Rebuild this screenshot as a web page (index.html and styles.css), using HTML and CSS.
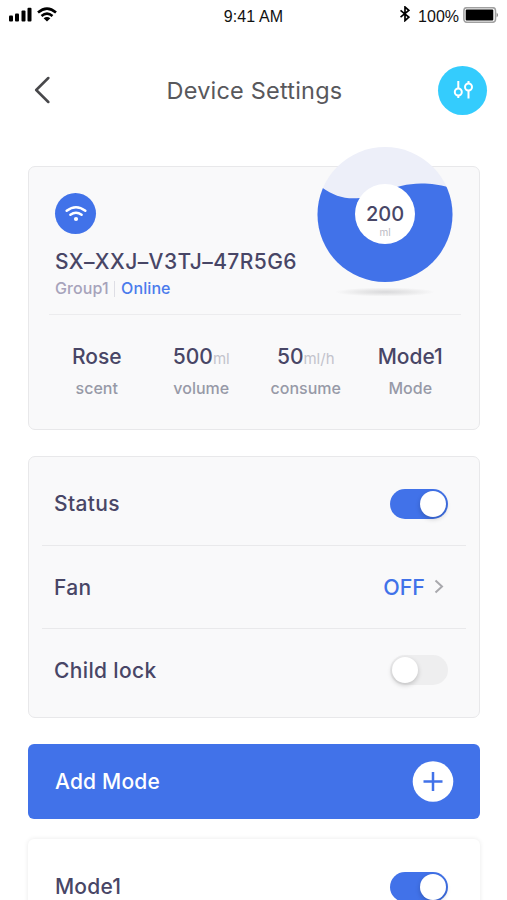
FILE: index.html
```html
<!DOCTYPE html>
<html lang="en">
<head>
<meta charset="utf-8">
<title>Device Settings</title>
<link rel="stylesheet" href="styles.css">
</head>
<body>
<div class="screen">
  <div class="statusbar">
    <div class="signal">
      <svg width="24" height="16" viewBox="0 0 24 16"><rect x="0" y="8.500" width="4" height="6" rx="1"/><rect x="6" y="6.500" width="4" height="8" rx="1"/><rect x="12.500" y="3.500" width="4" height="11" rx="1"/><rect x="18.500" y="0.700" width="4" height="13.800" rx="1"/></svg>
      <svg width="20" height="16" viewBox="0 0 20 16" fill="none" stroke="#000" stroke-width="2.600"><path d="M1 5.600Q10 -2.200 19 5.600"/><path d="M4.500 9Q10 4.400 15.500 9"/><path d="M10 14.500L6.600 11.300Q10 8.700 13.400 11.300Z" fill="#000" stroke="none"/></svg>
    </div>
    <div class="clock">9:41 AM</div>
    <div class="power">
      <svg class="bluetooth" width="10" height="16" viewBox="0 0 10 16" fill="none" stroke="#000" stroke-width="1.700"><path d="M0.500 4.300L8.800 11.200L5 14.600V1L8.800 4.400L0.500 11.200"/></svg>
      <span class="percent">100%</span>
      <svg width="36" height="16" viewBox="0 0 36 16"><rect x="0.900" y="0.700" width="31.600" height="14.600" rx="3" fill="#fff" stroke="#a0a0a0" stroke-width="1.500"/><rect x="2.700" y="2.500" width="27.600" height="11" rx="1"/><path d="M33.600 5.500Q36.500 8 33.600 10.500Z" fill="#888"/></svg>
    </div>
  </div>

  <header class="header">
    <svg class="back" width="16" height="28" viewBox="0 0 16 28" fill="none" stroke="#48484b" stroke-width="2.500" stroke-linecap="round" stroke-linejoin="round"><path d="M14.300 2L2.200 14L14.300 26"/></svg>
    <h1 class="title">Device Settings</h1>
    <button class="tune" aria-label="Adjust">
      <svg width="20" height="20" viewBox="0 0 20 20" fill="none" stroke="#fff" stroke-width="2"><path d="M5.300 1V8.500M5.300 16V18M15.500 1V3M15.500 10V18.500"/><circle cx="5.300" cy="12" r="3.500"/><circle cx="15.500" cy="7" r="3.500"/></svg>
    </button>
  </header>

  <section class="card device">
    <div class="device-top">
      <div class="wifi-badge">
        <svg width="22" height="18" viewBox="0 0 22 18" fill="none" stroke="#fff" stroke-width="2.500" stroke-linecap="round"><path d="M1.700 5.800Q11 -1.400 20.300 5.800"/><path d="M5.400 9.800Q11 5.700 16.600 9.800"/><circle cx="11" cy="14" r="2.100" fill="#fff" stroke="none"/></svg>
      </div>
      <div class="device-name">SX–XXJ–V3TJ–47R5G6</div>
      <div class="device-meta"><span class="group">Group1</span><i class="bar"></i><span class="online">Online</span></div>
    </div>
    <div class="gauge">
      <svg width="136" height="152" viewBox="0 0 136 152">
        <defs>
          <clipPath id="disc"><circle cx="68" cy="67.500" r="67.500"/></clipPath>
          <radialGradient id="shade"><stop offset="0" stop-color="#d9d9db"/><stop offset="0.500" stop-color="#e8e8e9"/><stop offset="1" stop-color="#f9f9fa"/></radialGradient>
        </defs>
        <ellipse cx="68" cy="145" rx="50" ry="4.500" fill="url(#shade)"/>
        <circle cx="68" cy="67.500" r="67.500" fill="#edeff9"/>
        <path clip-path="url(#disc)" fill="#4172e9" d="M0 36L5 40.500C17 49 28 52.500 43 51C60 49 76 37 104 36.500C115 36.500 122 38 131 40L136 41V136H0Z"/>
        <circle cx="68" cy="67" r="30" fill="#fff"/>
      </svg>
      <div class="gauge-text"><b>200</b><small>ml</small></div>
    </div>
    <div class="stats">
      <div class="stat"><div class="value">Rose</div><div class="label">scent</div></div>
      <div class="stat"><div class="value">500<small>ml</small></div><div class="label">volume</div></div>
      <div class="stat"><div class="value">50<small>ml/h</small></div><div class="label">consume</div></div>
      <div class="stat"><div class="value">Mode1</div><div class="label">Mode</div></div>
    </div>
  </section>

  <section class="card controls">
    <div class="row"><span class="name">Status</span><span class="switch on"></span></div>
    <div class="row"><span class="name">Fan</span><span class="choice">OFF<svg width="10" height="16" viewBox="0 0 10 16" fill="none" stroke="#a9a9ad" stroke-width="2"><path d="M1.500 1.500L8 7.500L1.500 13.500"/></svg></span></div>
    <div class="row"><span class="name">Child lock</span><span class="switch"></span></div>
  </section>

  <div class="add">
    <span class="name">Add Mode</span>
    <svg width="42" height="42" viewBox="0 0 42 42"><circle cx="21" cy="20.500" r="20.300" fill="#fff"/><path d="M11.500 20.500H30.500M21 11V30" stroke="#4172e9" stroke-width="2.500"/></svg>
  </div>

  <section class="mode">
    <span class="name">Mode1</span><span class="switch on"></span>
  </section>
</div>
</body>
</html>
```
FILE: styles.css
```css
* { box-sizing: border-box; }
body { margin: 0; background: #fff; font-family: Inter, "Liberation Sans", sans-serif; color: #484666; }
svg { display: block; flex: none; }
.screen { width: 507px; height: 900px; overflow: hidden; padding: 0 27px 0 28px; }

.statusbar { height: 30px; margin: 0 -19px 0 -20px; display: grid; grid-template-columns: 1fr auto 1fr; align-items: start; color: #111; font-family: "Liberation Sans", sans-serif; }
.signal { display: flex; gap: 4px; padding: 7px 0 0 1px; }
.clock { font-size: 16px; line-height: 18px; padding-top: 8px; letter-spacing: 0.1px; }
.power { display: flex; justify-content: flex-end; padding-top: 7px; }
.bluetooth { margin: -1px 8px 0 0; }
.percent { font-size: 16px; line-height: 18px; padding-top: 1px; margin-right: 4px; }

.header { height: 120px; display: flex; align-items: center; justify-content: space-between; }
.back { margin-left: 6px; }
.title { margin: 2px 0 0 21px; font-size: 23.500px; line-height: 30px; font-weight: 400; color: #58585c; letter-spacing: 0.2px; }
.tune { width: 49px; height: 49px; margin-right: -7px; padding: 0; border: 0; border-radius: 50%; background: #34ccfd; display: grid; place-items: center; }

.card { background: #f9f9fa; border: 1.500px solid #e8e8ea; border-radius: 7px; }
.device { position: relative; height: 264px; margin-top: 16px; padding: 0 18px; }
.device-top { height: 148px; padding: 26px 0 0 8px; border-bottom: 1px solid #ececee; margin-left: 2px; }
.wifi-badge { width: 41px; height: 41px; margin-left: -2px; border-radius: 50%; background: #4172e9; display: grid; place-items: center; }
.device-name { margin: 14px 0 0 -2px; font-size: 21px; line-height: 27px; font-weight: 500; letter-spacing: 0.430px; white-space: nowrap; }
.device-meta { display: flex; align-items: center; margin-left: -2px; font-size: 16px; line-height: 27px; font-weight: 500; letter-spacing: 0.080px; }
.group { color: #a7a3bb; }
.bar { width: 1.500px; height: 16px; margin: 0 6px 0 5px; background: #dedee5; }
.online { color: #4b7bec; }
.gauge { position: absolute; left: 288px; top: -20px; }
.gauge-text { position: absolute; left: 0; top: 57px; width: 136px; text-align: center; }
.gauge-text b { display: block; font-size: 20px; line-height: 20px; font-weight: 500; }
.gauge-text small { display: block; margin-top: 2px; font-size: 10px; line-height: 12px; color: #b9b9c2; }
.stats { display: grid; grid-template-columns: repeat(4, 104.500px); margin-left: -2.500px; padding-top: 27px; text-align: center; }
.value { height: 30px; font-size: 21px; line-height: 30px; font-weight: 550; white-space: nowrap; }
.value small { font-size: 15px; line-height: 1; font-weight: 400; color: #c3c3cc; }
.label { font-size: 16px; line-height: 24px; margin-top: 4px; font-weight: 500; color: #9799a7; }

.controls { height: 262px; margin-top: 26px; padding: 5px 13px 0; }
.row { height: 83px; display: flex; align-items: center; justify-content: space-between; padding: 0 18px 0 12px; }
.row + .row { border-top: 1.500px solid #e9e9eb; }
.name { padding-top: 1px; font-size: 21px; line-height: 30px; font-weight: 500; letter-spacing: 0.350px; }
.choice { display: flex; align-items: center; gap: 9px; margin-right: 4px; font-size: 21.500px; font-weight: 500; color: #4172e9; }
.switch { display: flex; width: 58px; height: 30px; padding: 2px; border-radius: 15px; background: #eeeeef; }
.switch::after { content: ""; width: 26px; height: 26px; border-radius: 50%; background: #fff; box-shadow: 0 2px 5px rgba(0,0,0,.2); }
.switch.on { justify-content: flex-end; background: #4172e9; }

.add { height: 75px; margin-top: 26px; padding: 0 26px 0 27px; display: flex; align-items: center; justify-content: space-between; border-radius: 6px; background: #4172e9; color: #fff; }
.mode { height: 95px; margin-top: 20px; padding: 0 32px 0 27px; display: flex; align-items: center; justify-content: space-between; border-radius: 6px; background: #fff; box-shadow: 0 0 5px rgba(0,0,0,.09); }
.add .name, .mode .name { letter-spacing: 0.200px; }
```
